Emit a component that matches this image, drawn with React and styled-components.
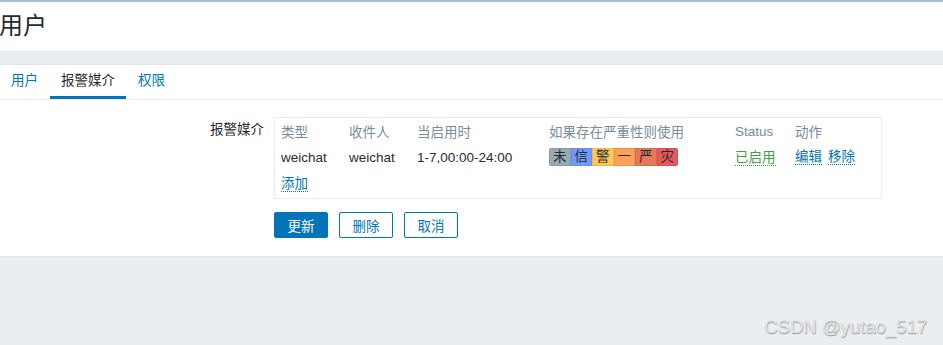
import React from 'react';
import styled, { createGlobalStyle } from 'styled-components';

const GlobalStyle = createGlobalStyle`
  html, body {
    margin: 0;
    padding: 0;
    background: #ebeef0;
    font-family: "Liberation Sans", "Noto Sans CJK SC", sans-serif;
    font-size: 13px;
    color: #1f2c33;
  }
`;

const Page = styled.div`
  position: relative;
  width: 943px;
  height: 345px;
  background: #ebeef0;
  overflow: hidden;
`;

const Header = styled.div`
  height: 49px;
  background: #fff;
  border-top: 2px solid #a9bbd6;
  border-bottom: 1px solid #dfe4e7;
`;

const Title = styled.h1`
  margin: 0;
  padding-top: 8px;
  font-size: 24px;
  font-weight: normal;
  line-height: 32px;
  color: #1f2c33;
  margin-left: -1px;
`;

const Strip = styled.div`
  height: 12px;
  background: #ebeef0;
`;

const TabBar = styled.div`
  display: flex;
  gap: 1px;
  height: 34px;
  background: #fff;
  border-top: 1px solid #dfe4e7;
  border-bottom: 1px solid #ebeef0;
`;

const Tab = styled.div`
  padding: 0 11px;
  line-height: 31px;
  font-size: 13.5px;
  color: ${p => (p.$active ? '#1f2c33' : '#0275b8')};
  border-bottom: 3px solid ${p => (p.$active ? '#0275b8' : 'transparent')};
`;

const Content = styled.div`
  background: #fff;
  padding: 17px 0 18px;
  border-bottom: 1px solid #dfe4e7;
`;

const FormRow = styled.div`
  display: grid;
  grid-template-columns: 264px 608px;
  column-gap: 10px;
`;

const Label = styled.div`
  text-align: right;
  line-height: 26px;
  font-size: 13.5px;
`;

const Box = styled.div`
  border: 1px solid #ebeef0;
  padding: 0 6px 2px;
`;

const Row = styled.div`
  display: grid;
  grid-template-columns: 68px 68px 132px 186px 60px 1fr;
  height: 26px;
  align-items: center;
  font-size: 13.5px;
  color: ${p => (p.$head ? '#768d99' : '#1f2c33')};
  white-space: nowrap;
`;

const Link = styled.span`
  color: ${p => p.$color || '#0275b8'};
  border-bottom: 1px dotted ${p => p.$color || '#0275b8'};
  line-height: 15px;
  cursor: pointer;
`;

const Actions = styled.div`
  display: flex;
  gap: 6px;
`;

const SeverityBar = styled.div`
  display: flex;
  width: 129px;
  height: 18px;
  border-radius: 2px;
  overflow: hidden;
`;

const Sev = styled.span`
  flex: 1;
  display: flex;
  align-items: center;
  justify-content: center;
  background: ${p => p.$bg};
  box-shadow: inset 0 0 0 1px rgba(0, 0, 0, 0.08);
  font-size: 13.5px;
  line-height: 18px;
  color: #1f2c33;
`;

const Buttons = styled.div`
  display: flex;
  gap: 11px;
  margin-top: 13px;
  margin-left: 274px;
`;

const Button = styled.button`
  width: 54px;
  height: 26px;
  padding: 0;
  border-radius: 2px;
  font-family: inherit;
  font-size: 13.5px;
  border: 1px solid #0275b8;
  background: ${p => (p.$primary ? '#0275b8' : '#fff')};
  color: ${p => (p.$primary ? '#fff' : '#0275b8')};
`;

const Watermark = styled.div`
  position: absolute;
  right: 16px;
  bottom: 7px;
  font-size: 18.5px;
  color: #e2e5e8;
  text-shadow: 0.5px 0.5px 1px rgba(80, 85, 90, 0.6);
`;

const severities = [
  ['未', '#97aab3'],
  ['信', '#7499ff'],
  ['警', '#ffc859'],
  ['一', '#ffa059'],
  ['严', '#e97659'],
  ['灾', '#e45959'],
];

export default function App() {
  return (
    <Page>
      <GlobalStyle />
      <Header>
        <Title>用户</Title>
      </Header>
      <Strip />
      <TabBar>
        <Tab>用户</Tab>
        <Tab $active>报警媒介</Tab>
        <Tab>权限</Tab>
      </TabBar>
      <Content>
        <FormRow>
          <Label>报警媒介</Label>
          <Box>
            <Row $head>
              <span>类型</span>
              <span>收件人</span>
              <span>当启用时</span>
              <span>如果存在严重性则使用</span>
              <span>Status</span>
              <span>动作</span>
            </Row>
            <Row>
              <span>weichat</span>
              <span>weichat</span>
              <span>1-7,00:00-24:00</span>
              <SeverityBar>
                {severities.map(([t, c]) => (
                  <Sev key={t} $bg={c}>{t}</Sev>
                ))}
              </SeverityBar>
              <span><Link $color="#429e47">已启用</Link></span>
              <Actions>
                <Link>编辑</Link>
                <Link>移除</Link>
              </Actions>
            </Row>
            <Row>
              <span><Link>添加</Link></span>
            </Row>
          </Box>
        </FormRow>
        <Buttons>
          <Button $primary>更新</Button>
          <Button>删除</Button>
          <Button>取消</Button>
        </Buttons>
      </Content>
      <Watermark>CSDN @yutao_517</Watermark>
    </Page>
  );
}
